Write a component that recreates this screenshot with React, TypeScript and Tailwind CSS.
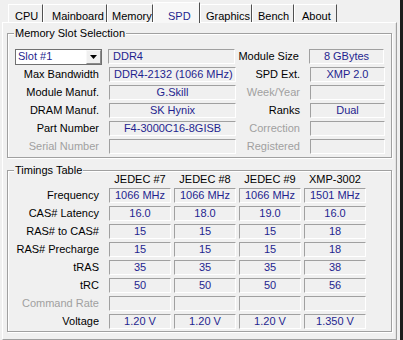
const tabs = [
  { t: "CPU", w: "w-[35px] pl-[6px]" },
  { t: "Mainboard", w: "w-[64px] pl-[8px]" },
  { t: "Memory", w: "w-[46px] pl-[4px]" },
  { t: "SPD", w: "w-[47px] pl-[14px]" },
  { t: "Graphics", w: "w-[52px] pl-[5px]" },
  { t: "Bench", w: "w-[42px] pl-[5px]" },
  { t: "About", w: "w-[43px] pl-[7px]" },
]

const field =
  "h-[15px] border border-[#a0a0a0] border-r-white border-b-white flex items-center text-[#1f1f8f] leading-none"

function Label({ text, w, dim }: { text: string; w: string; dim?: boolean }) {
  return <div className={`${w} text-right ${dim ? "text-[#a0a0a0]" : "text-black"}`}>{text}</div>
}

function Group({ title, children, className }: { title: string; children: React.ReactNode; className?: string }) {
  return (
    <div
      className={`relative border border-[#a0a0a0] shadow-[inset_1px_1px_0_#fff,1px_1px_0_#fff] ${className ?? ""}`}
    >
      <span className="absolute left-[6px] -top-[7px] bg-[#f0f0f0] px-[1px] leading-[13px] text-black">{title}</span>
      {children}
    </div>
  )
}

const slotRows = [
  { l: "Max Bandwidth", v: "DDR4-2132 (1066 MHz)", left: true, l2: "SPD Ext.", v2: "XMP 2.0" },
  { l: "Module Manuf.", v: "G.Skill", l2: "Week/Year", v2: "", dim2: true },
  { l: "DRAM Manuf.", v: "SK Hynix", l2: "Ranks", v2: "Dual" },
  { l: "Part Number", v: "F4-3000C16-8GISB", l2: "Correction", v2: "", dim2: true },
  { l: "Serial Number", v: "", dim: true, l2: "Registered", v2: "", dim2: true },
]

const timings = [
  { l: "Frequency", v: ["1066 MHz", "1066 MHz", "1066 MHz", "1501 MHz"] },
  { l: "CAS# Latency", v: ["16.0", "18.0", "19.0", "16.0"] },
  { l: "RAS# to CAS#", v: ["15", "15", "15", "18"] },
  { l: "RAS# Precharge", v: ["15", "15", "15", "18"] },
  { l: "tRAS", v: ["35", "35", "35", "38"] },
  { l: "tRC", v: ["50", "50", "50", "56"] },
  { l: "Command Rate", v: ["", "", "", ""], dim: true },
  { l: "Voltage", v: ["1.20 V", "1.20 V", "1.20 V", "1.350 V"] },
]

export default function App() {
  return (
    <div className="w-[403px] h-[340px] flex bg-[#f0f0f0] overflow-hidden font-['Liberation_Sans',Arial,sans-serif] text-[11px] select-none">
      <div className="w-[400px] flex flex-col">
        {/* tab strip */}
        <div className="h-[22px] flex items-end pl-[8px]">
          {tabs.map(({ t, w }) => {
            const active = t === "SPD"
            return (
              <div
                key={t}
                className={`${w} whitespace-nowrap border-t border-l border-white border-r border-r-[#505050] flex items-start ${
                  active
                    ? "relative z-10 -mb-[1px] h-[21px] pt-[5px] bg-[#f7f7f7] text-[#1f1f8f]"
                    : "h-[18px] pt-[3px] text-black"
                }`}
              >
                {t}
              </div>
            )
          })}
        </div>

        {/* panel */}
        <div className="flex-1 ml-[2px] mr-[3px] border border-[#a0a0a0] border-l-white border-t-white shadow-[inset_-1px_0_0_#e3e3e3] px-[4px] pt-[10px]">
          <Group title="Memory Slot Selection" className="pt-[15px] pb-[3px]">
            <div className="flex flex-col gap-[3px]">
              <div className="flex h-[15px] items-center">
                <div className="w-[100px] pl-[7px]">
                  <div className="w-[87px] h-[16px] border border-[#707070] bg-white flex items-center">
                    <span className="flex-1 pl-[2px] text-[#1f1f8f] leading-none">Slot #1</span>
                    <div className="w-[15px] h-[14px] bg-[#f0f0f0] border border-[#f8f8f8] border-r-[#8a8a8a] border-b-[#8a8a8a] flex items-center justify-center">
                      <svg width="7" height="4" viewBox="0 0 7 4">
                        <path d="M0 0h7L3.5 4z" fill="#000" />
                      </svg>
                    </div>
                  </div>
                </div>
                <div className={`${field} w-[127px] pl-[4px]`}>DDR4</div>
                <Label text="Module Size" w="w-[64px]" />
                <div className={`${field} ml-[10px] w-[75px] justify-center`}>8 GBytes</div>
              </div>
              {slotRows.map((r) => (
                <div key={r.l} className="flex h-[15px] items-center">
                  <Label text={r.l} w="w-[91px]" dim={r.dim} />
                  <div className={`${field} ml-[10px] w-[127px] ${r.left ? "pl-[4px]" : "justify-center"}`}>{r.v}</div>
                  <Label text={r.l2} w="w-[64px]" dim={r.dim2} />
                  <div className={`${field} ml-[10px] w-[75px] justify-center`}>{r.v2}</div>
                </div>
              ))}
            </div>
          </Group>

          <Group title="Timings Table" className="mt-[12px] pb-[2px]">
            <div className="flex flex-col gap-[3px]">
              <div className="flex h-[14px] items-end">
                <div className="w-[101px]" />
                <div className="flex gap-[3px]">
                  {["JEDEC #7", "JEDEC #8", "JEDEC #9", "XMP-3002"].map((h) => (
                    <div key={h} className="w-[62px] text-center text-black leading-none">
                      {h}
                    </div>
                  ))}
                </div>
              </div>
              {timings.map((r) => (
                <div key={r.l} className="flex h-[15px] items-center">
                  <Label text={r.l} w="w-[91px]" dim={r.dim} />
                  <div className="ml-[10px] flex gap-[3px]">
                    {r.v.map((v, i) => (
                      <div key={i} className={`${field} w-[62px] justify-center`}>
                        {v}
                      </div>
                    ))}
                  </div>
                </div>
              ))}
            </div>
          </Group>
        </div>
      </div>
      <div className="w-[3px] bg-[#1c1c1c]" />
    </div>
  )
}
